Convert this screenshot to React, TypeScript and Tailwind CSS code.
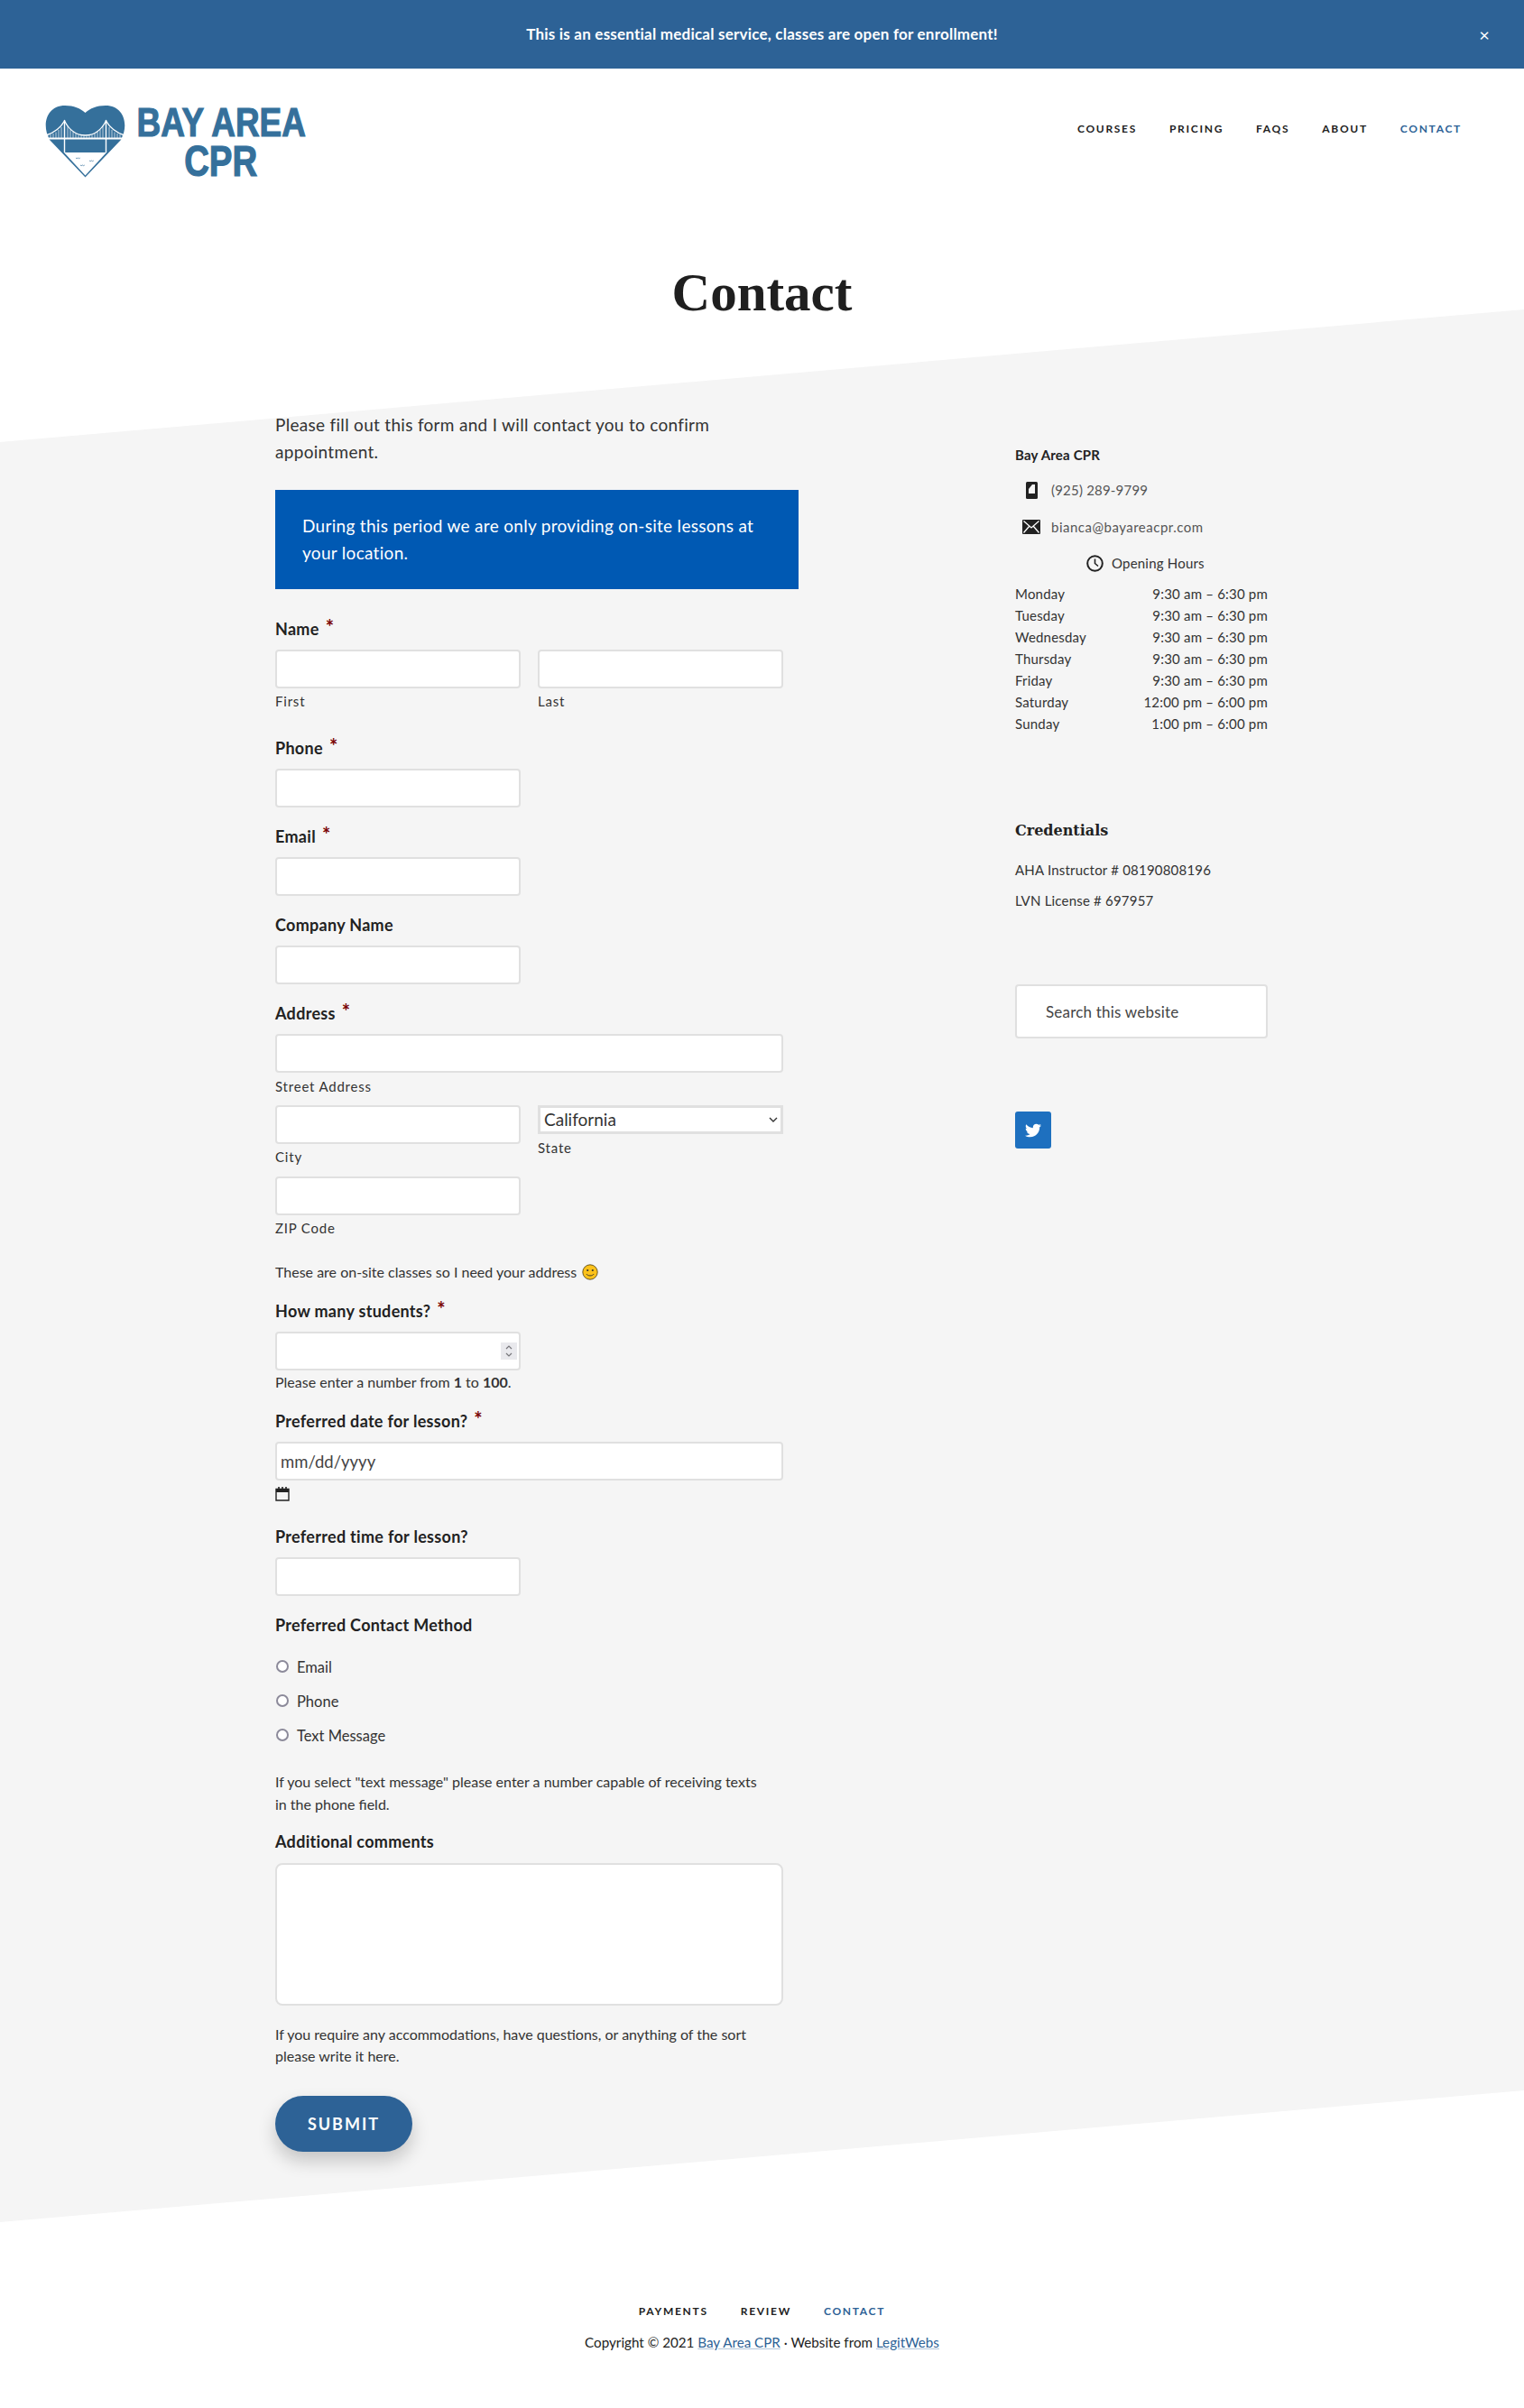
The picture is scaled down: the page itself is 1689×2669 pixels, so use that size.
import { FaTwitter } from "react-icons/fa";

const BODY = "font-['Lato','Liberation_Sans',sans-serif]";
const INPUT = "block h-[43px] bg-white border-2 border-[#e0e0e0] rounded-[4px]";

const HOURS = [
  ["Monday", "9:30 am – 6:30 pm"],
  ["Tuesday", "9:30 am – 6:30 pm"],
  ["Wednesday", "9:30 am – 6:30 pm"],
  ["Thursday", "9:30 am – 6:30 pm"],
  ["Friday", "9:30 am – 6:30 pm"],
  ["Saturday", "12:00 pm – 6:00 pm"],
  ["Sunday", "1:00 pm – 6:00 pm"],
];

const Logo = () => (
  <div className="flex items-start">
    <svg width="90" height="80" viewBox="0 0 90 80" className="mt-[3px]">
      <path d="M44.5 79.5 L5 38 C-4 22 1 0 22 0 C32 0 39 3 44.5 8 C50 3 57 0 67 0 C88 0 93 22 84 38 Z" fill="#35709b" />
      <path d="M21 52 L68 52 L44.5 77.5 Z" fill="#fff" />
      <path d="M1 33 C10 30 17 25 21.5 17 C27 28 36 33 44.5 33 C53 33 62 28 67.5 17 C72 25 79 30 88 33" fill="none" stroke="#fff" strokeWidth="1.4" />
      <path d="M3 36 V33 M6 36 V32 M9 36 V31 M12 36 V29.5 M15 36 V27 M18 36 V24 M25 36 V23 M28 36 V26.5 M31 36 V29 M34 36 V31 M37 36 V32.5 M40 36 V33 M43 36 V33.5 M46 36 V33.5 M49 36 V33 M52 36 V32.5 M55 36 V31 M58 36 V29 M61 36 V26.5 M64 36 V23 M71 36 V24 M74 36 V27 M77 36 V29.5 M80 36 V31 M83 36 V32 M86 36 V33" stroke="#fff" strokeWidth="0.8" opacity="0.85" />
      <path d="M1.5 36.5 H87.5" stroke="#fff" strokeWidth="1.8" />
      <path d="M21.5 16 V52 M67.5 16 V52" stroke="#fff" strokeWidth="1.4" />
      <path d="M34 58 q1.2 1.4 2.4 0 q1.2 1.4 2.4 0 M49 61 q1.2 1.4 2.4 0 q1.2 1.4 2.4 0 M39 66 q1.2 1.4 2.4 0 q1.2 1.4 2.4 0" fill="none" stroke="#35709b" strokeWidth="0.7" />
    </svg>
    <div className="ml-[10px] w-[190px] flex flex-col items-center font-['Liberation_Sans',sans-serif] font-bold text-[#35709b] [-webkit-text-stroke:1.2px_#35709b]">
      <span className="text-[45px] leading-[44px] whitespace-nowrap scale-x-[0.82]">BAY AREA</span>
      <span className="text-[48px] leading-[41px] whitespace-nowrap scale-x-[0.8]">CPR</span>
    </div>
  </div>
);

const NavLink = ({ label, active }: { label: string; active?: boolean }) => (
  <a className={`text-[12px] font-bold tracking-[1.7px] leading-[24px] whitespace-nowrap ${active ? "text-[#2d6296]" : "text-[#222]"}`}>{label}</a>
);

const Label = ({ text, required, className }: { text: string; required?: boolean; className?: string }) => (
  <div className={`h-[24px] leading-[24px] text-[18px] font-bold tracking-[0.3px] text-[#222] whitespace-nowrap ${className ?? ""}`}>
    {text}
    {required && <span className="relative -top-[1px] ml-[7px] text-[#790000] text-[22px] leading-none">*</span>}
  </div>
);

const Sub = ({ text, className }: { text: string; className?: string }) => (
  <div className={`h-[20px] leading-[20px] text-[15px] tracking-[0.8px] text-[#333] ${className ?? "mt-[4px]"}`}>{text}</div>
);

const Radio = ({ text }: { text: string }) => (
  <div className="h-[38px] flex items-center">
    <span className="w-[14px] h-[14px] ml-[1px] -mt-[3px] rounded-full border-2 border-[#8c8a9a] bg-white"></span>
    <span className="ml-[9px] text-[16.5px] text-[#333]">{text}</span>
  </div>
);

const Smiley = () => (
  <svg width="18" height="18" viewBox="0 0 18 18" className="inline-block ml-[6px] -mt-[3px] align-middle">
    <circle cx="9" cy="9" r="8.2" fill="#fcc21b" stroke="#4a3b12" strokeWidth="0.8" />
    <circle cx="6.2" cy="7" r="1.1" fill="#2f2f2f" />
    <circle cx="11.8" cy="7" r="1.1" fill="#2f2f2f" />
    <path d="M4.8 11 C6.5 13.6 11.5 13.6 13.2 11" fill="none" stroke="#2f2f2f" strokeWidth="0.9" />
  </svg>
);

const ContactForm = () => (
  <div className="w-[580px] shrink-0">
    <p className="text-[19px] tracking-[0.3px] leading-[30px] text-[#333] -mt-[1px]">Please fill out this form and I will contact you to confirm<br />appointment.</p>
    <div className="mt-[27px] h-[110px] bg-[#0059b3] py-[25px] px-[30px] text-[19px] tracking-[0.3px] leading-[30px] text-white">
      During this period we are only providing on-site lessons at<br />your location.
    </div>

    <Label text="Name" required className="mt-[32px]" />
    <div className="mt-[11px] flex gap-[19px]">
      <div className="w-[272px]">
        <input className={`${INPUT} w-full`} />
        <Sub text="First" />
      </div>
      <div className="w-[272px]">
        <input className={`${INPUT} w-full`} />
        <Sub text="Last" />
      </div>
    </div>

    <Label text="Phone" required className="mt-[30px]" />
    <input className={`${INPUT} w-[272px] mt-[11px]`} />

    <Label text="Email" required className="mt-[20px]" />
    <input className={`${INPUT} w-[272px] mt-[11px]`} />

    <Label text="Company Name" className="mt-[20px]" />
    <input className={`${INPUT} w-[272px] mt-[11px]`} />

    <Label text="Address" required className="mt-[20px]" />
    <input className={`${INPUT} w-[563px] mt-[11px]`} />
    <Sub text="Street Address" className="mt-[5px]" />
    <div className="mt-[11px] flex gap-[19px]">
      <div className="w-[272px]">
        <input className={`${INPUT} w-full`} />
        <Sub text="City" />
      </div>
      <div className="w-[272px]">
        <div className="relative">
          <select defaultValue="California" className="block w-full h-[32px] pl-[4px] appearance-none rounded-none bg-white border-[3px] border-[#e0e0e0] text-[19px] leading-[26px] text-[#333]">
            <option>California</option>
          </select>
          <svg width="10" height="7" viewBox="0 0 10 7" fill="none" stroke="#333" strokeWidth="1.4" className="absolute right-[6px] top-[13px]">
            <path d="M1 1 L5 5 L9 1" />
          </svg>
        </div>
        <Sub text="State" className="mt-[5px]" />
      </div>
    </div>
    <input className={`${INPUT} w-[272px] mt-[12px]`} />
    <Sub text="ZIP Code" />

    <div className="mt-[27px] h-[24px] leading-[24px] text-[16px] text-[#333] whitespace-nowrap">
      These are on-site classes so I need your address
      <Smiley />
    </div>

    <Label text="How many students?" required className="mt-[19px]" />
    <div className="relative mt-[11px] w-[272px]">
      <input className={`${INPUT} w-full`} />
      <span className="absolute left-[250px] top-[12px] w-[18px] h-[19px] bg-[#e9e9ed] flex items-center justify-center">
        <svg width="10" height="15" viewBox="0 0 10 15" fill="none" stroke="#77767b" strokeWidth="1.2">
          <path d="M2 5 L5 2 L8 5" />
          <path d="M2 10 L5 13 L8 10" />
        </svg>
      </span>
    </div>
    <div className="mt-[3px] h-[20px] leading-[20px] text-[16px] text-[#333]">
      Please enter a number from <b>1</b> to <b>100</b>.
    </div>

    <Label text="Preferred date for lesson?" required className="mt-[21px]" />
    <input placeholder="mm/dd/yyyy" className={`${INPUT} w-[563px] mt-[11px] px-[4px] text-[18.5px] placeholder:text-[#444]`} />
    <svg width="16" height="16" viewBox="0 0 16 16" className="block mt-[7px]">
      <path d="M1 2.5 H15 V15 H1 Z" fill="none" stroke="#222" strokeWidth="1.4" />
      <path d="M1 2.5 H15 V6 H1 Z" fill="#222" />
      <path d="M4 0 V3 M8 0 V3 M12 0 V3" stroke="#222" strokeWidth="1.6" />
    </svg>

    <Label text="Preferred time for lesson?" className="mt-[27px]" />
    <input className={`${INPUT} w-[272px] mt-[11px]`} />

    <Label text="Preferred Contact Method" className="mt-[20px]" />
    <div className="mt-[16px]">
      <Radio text="Email" />
      <Radio text="Phone" />
      <Radio text="Text Message" />
    </div>

    <p className="mt-[19px] w-[563px] text-[16px] leading-[25px] text-[#333]">
      If you select "text message" please enter a number capable of receiving texts<br />in the phone field.
    </p>

    <Label text="Additional comments" className="mt-[17px]" />
    <textarea className="block mt-[12px] w-[563px] h-[158px] bg-white border-2 border-[#e0e0e0] rounded-[8px] resize-none"></textarea>

    <p className="mt-[20px] w-[563px] text-[16px] leading-[24px] text-[#333]">
      If you require any accommodations, have questions, or anything of the sort<br />please write it here.
    </p>

    <button className="mt-[32px] block w-[152px] h-[62px] rounded-full bg-[#2d6296] text-white text-[18px] font-bold tracking-[2px] shadow-[0_10px_20px_rgba(0,0,0,0.2)]">
      SUBMIT
    </button>
  </div>
);

const Sidebar = () => (
  <aside className="w-[280px] shrink-0 ml-[240px] text-[15px] tracking-[0.2px] text-[#333]">
    <div className="mt-[37px] h-[20px] leading-[20px] font-bold text-[#222]">Bay Area CPR</div>

    <div className="mt-[17px] h-[24px] flex items-center text-[#555]">
      <span className="w-[36px] mr-[4px] flex justify-center">
        <svg width="13" height="19" viewBox="0 0 13 19">
          <rect x="0" y="0" width="13" height="19" rx="1.5" fill="#222" />
          <path d="M3 3 H10 V13 H3 Z" fill="#f5f5f5" />
          <path d="M3 13 L3 8 L7 3 H3 Z" fill="#222" />
        </svg>
      </span>
      <span>(925) 289-9799</span>
    </div>
    <div className="mt-[17px] h-[24px] flex items-center text-[#555]">
      <span className="w-[36px] mr-[4px] flex justify-center">
        <svg width="20" height="16" viewBox="0 0 20 16">
          <rect x="0" y="0" width="20" height="16" rx="1" fill="#222" />
          <path d="M1.5 1.5 L10 9 L18.5 1.5 M1.5 14.5 L7.5 7.5 M18.5 14.5 L12.5 7.5" fill="none" stroke="#fff" strokeWidth="1.3" />
        </svg>
      </span>
      <span className="tracking-[0.5px]">bianca@bayareacpr.com</span>
    </div>

    <div className="mt-[16px] h-[24px] flex items-center pl-[79px]">
      <svg width="19" height="19" viewBox="0 0 19 19" fill="none" stroke="#222" strokeWidth="2">
        <circle cx="9.5" cy="9.5" r="8.3" />
        <path d="M9.5 4.5 V9.5 L13 12.5" strokeWidth="1.6" />
      </svg>
      <span className="ml-[9px]">Opening Hours</span>
    </div>

    <div className="mt-[10px]">
      {HOURS.map(([day, time]) => (
        <div key={day} className="h-[24px] leading-[24px] flex justify-between">
          <span>{day}</span>
          <span>{time}</span>
        </div>
      ))}
    </div>

    <h3 className="mt-[93px] h-[28px] leading-[28px] tracking-normal font-['DejaVu_Serif','Liberation_Serif',serif] font-bold text-[16px] text-[#222]">Credentials</h3>
    <p className="mt-[19px] h-[20px] leading-[20px]">AHA Instructor # 08190808196</p>
    <p className="mt-[14px] h-[20px] leading-[20px]">LVN License # 697957</p>

    <input placeholder="Search this website" className="block mt-[83px] w-[280px] h-[60px] pl-[32px] bg-white border-2 border-[#e0e0e0] rounded-[4px] text-[17px] placeholder:text-[#444]" />

    <a className="mt-[81px] w-[40px] h-[41px] rounded-[3px] bg-[#1e70bf] flex items-center justify-center text-white">
      <FaTwitter size={18} />
    </a>
  </aside>
);

export default function App() {
  return (
    <div className={`${BODY} bg-white w-[1689px] h-[2669px] overflow-hidden`}>
      <div className="relative h-[76px] bg-[#2d6296] flex items-center justify-center text-white text-[17px] tracking-[0.22px] font-bold">
        This is an essential medical service, classes are open for enrollment!
        <span className="absolute right-[38px] top-[26px] text-[20px] font-normal leading-[24px]">×</span>
      </div>

      <header className="h-[122px] pt-[38px] pl-[50px] pr-[69px] flex justify-between items-start">
        <Logo />
        <nav className="flex gap-[36px] mt-[17px]">
          <NavLink label="COURSES" />
          <NavLink label="PRICING" />
          <NavLink label="FAQS" />
          <NavLink label="ABOUT" />
          <NavLink label="CONTACT" active />
        </nav>
      </header>

      <div className="h-[145px] pt-[104px] text-center">
        <h1 className="font-['Liberation_Serif','DejaVu_Serif',serif] font-bold text-[59px] leading-[45px] text-[#1f1f1f]">Contact</h1>
      </div>

      <section className="h-[2120px] bg-[#f5f5f5] [clip-path:polygon(0_147px,100%_0,100%_calc(100%-146px),0_100%)] pt-[114px] pl-[305px] flex items-start">
        <ContactForm />
        <Sidebar />
      </section>

      <footer className="pt-[87px] flex flex-col items-center">
        <nav className="flex gap-[36px]">
          <NavLink label="PAYMENTS" />
          <NavLink label="REVIEW" />
          <NavLink label="CONTACT" active />
        </nav>
        <div className="mt-[10px] h-[24px] leading-[24px] text-[15.2px] text-[#222]">
          Copyright © 2021 <a className="text-[#2d6296] underline decoration-[#b4c7da]">Bay Area CPR</a> · Website from <a className="text-[#2d6296] underline decoration-[#b4c7da]">LegitWebs</a>
        </div>
      </footer>
    </div>
  );
}
